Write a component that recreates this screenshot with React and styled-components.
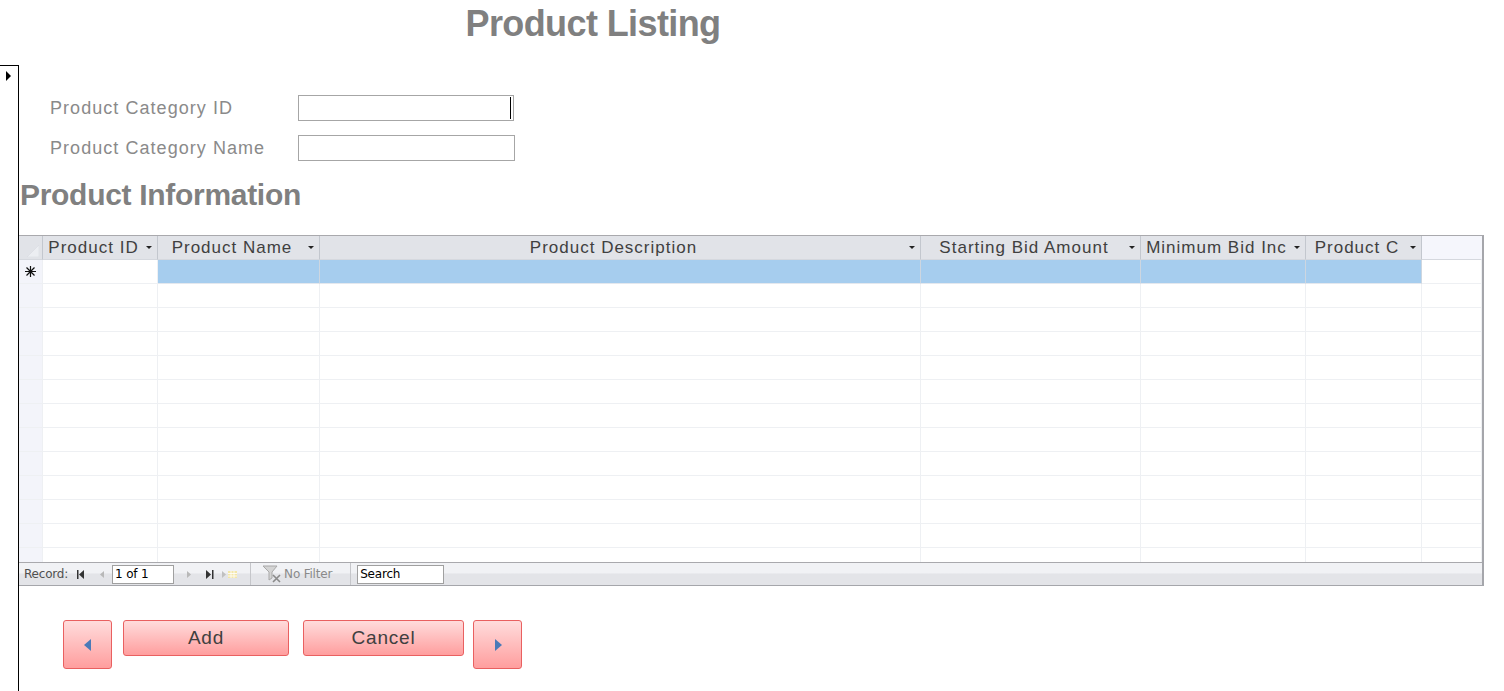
import React from 'react';
import styled, { createGlobalStyle } from 'styled-components';

const GlobalStyle = createGlobalStyle`
  html, body {
    margin: 0;
    padding: 0;
    background: #ffffff;
    font-family: "Liberation Sans", Arial, sans-serif;
  }
`;

const Page = styled.div`
  width: 1504px;
  height: 691px;
  overflow: hidden;
  display: flex;
  flex-direction: column;
`;

const TitleBar = styled.div`
  width: 1186px;
  height: 65px;
  text-align: center;
`;

const Title = styled.h1`
  margin: 0;
  padding-top: 3px;
  font-size: 36px;
  line-height: 42px;
  font-weight: bold;
  color: #808080;
  letter-spacing: -0.6px;
`;

const Body = styled.div`
  flex: 1;
  display: flex;
`;

const Selector = styled.div`
  width: 18px;
  border-top: 1px solid #000;
  border-right: 1px solid #000;
  position: relative;
`;

const Pointer = styled.div`
  position: absolute;
  top: 5px;
  left: 6px;
  width: 0;
  height: 0;
  border-top: 5px solid transparent;
  border-bottom: 5px solid transparent;
  border-left: 5px solid #000;
`;

const Content = styled.div`
  flex: 1;
  display: flex;
  flex-direction: column;
`;

const Fields = styled.div`
  padding: 30px 0 0 31px;
  display: flex;
  flex-direction: column;
  gap: 14px;
`;

const FieldRow = styled.div`
  display: flex;
  align-items: center;
  height: 26px;
`;

const Label = styled.label`
  width: 248px;
  font-size: 18px;
  color: #8a8a8a;
  letter-spacing: 1.05px;
`;

const Input = styled.div`
  box-sizing: border-box;
  width: ${p => p.$w}px;
  height: 26px;
  border: 1px solid #a6a6a6;
  background: #fff;
  position: relative;
`;

const Caret = styled.span`
  position: absolute;
  right: 2px;
  top: 1px;
  width: 1px;
  height: 22px;
  background: #000;
`;

const Section = styled.h2`
  margin: 14px 0 0 1px;
  font-size: 30px;
  line-height: 40px;
  font-weight: bold;
  color: #808080;
  letter-spacing: -0.3px;
`;

const Sheet = styled.div`
  margin-top: 20px;
  width: 1465px;
  box-sizing: border-box;
  border-top: 1px solid #a9a9ad;
  border-right: 2px solid #a5a6ab;
  border-bottom: 1px solid #a5a6ab;
  display: flex;
  flex-direction: column;
`;

const COLS = '24px 115px 162px 601px 220px 165px 116px 1fr';

const Row = styled.div`
  display: grid;
  grid-template-columns: ${COLS};
  height: 24px;
`;

const HeadCell = styled.div`
  box-sizing: border-box;
  display: flex;
  align-items: center;
  padding: 0 5px 0 2px;
  background: ${p => (p.$blank ? '#f5f6fc' : '#e1e3e8')};
  border-right: 1px solid ${p => (p.$blank ? 'transparent' : '#c3c7ce')};
  border-bottom: 1px solid #d5d8de;
  font-size: 17px;
  letter-spacing: 1px;
  color: #404040;
  overflow: hidden;
  white-space: nowrap;
  position: relative;
`;

const HeadText = styled.span`
  flex: 1;
  text-align: center;
  overflow: hidden;
`;

const DropArrow = styled.span`
  flex: none;
  width: 0;
  height: 0;
  margin-left: 4px;
  border-left: 3px solid transparent;
  border-right: 3px solid transparent;
  border-top: 3px solid #222;
`;

const Corner = styled.svg`
  position: absolute;
  left: 8px;
  bottom: 2px;
`;

const Cell = styled.div`
  box-sizing: border-box;
  border-right: 1px solid ${p => (p.$blue ? '#cdd6e0' : '#eef0f3')};
  border-bottom: 1px solid ${p => (p.$blue ? '#e4e8ee' : '#eef0f3')};
  background: ${p => (p.$blue ? '#a6cdee' : p.$side ? '#f3f4fa' : '#fff')};
  display: flex;
  align-items: center;
  justify-content: center;
`;

const Rows = styled.div`
  height: 302px;
  overflow: hidden;
`;

const NavBar = styled.div`
  height: 22px;
  border-top: 1px solid #a9a9ad;
  background: linear-gradient(#f1f2f5 0%, #f1f2f5 45%, #e3e4e8 50%, #e3e4e8 100%);
  display: flex;
  align-items: center;
  font-family: "DejaVu Sans", "Liberation Sans", sans-serif;
  font-size: 12px;
  color: #505050;
`;

const NavLabel = styled.span`
  margin-left: 5px;
  margin-right: 9px;
  letter-spacing: -0.2px;
`;

const NavIcon = styled.svg`
  flex: none;
  margin-right: ${p => p.$mr || 10}px;
`;

const NavBox = styled.div`
  box-sizing: border-box;
  width: ${p => p.$w}px;
  height: 19px;
  border: 1px solid #a0a0a0;
  background: #fff;
  padding-left: 2px;
  display: flex;
  align-items: center;
  color: #000;
  letter-spacing: -0.2px;
`;

const Divider = styled.span`
  width: 1px;
  align-self: stretch;
  background: #c5c6ca;
  margin: 0 ${p => p.$r}px 0 ${p => p.$l}px;
`;

const FilterText = styled.span`
  color: #8a8a8a;
  letter-spacing: -0.2px;
`;

const Buttons = styled.div`
  margin: 34px 0 0 44px;
  display: flex;
  align-items: flex-start;
`;

const Btn = styled.button`
  box-sizing: border-box;
  width: ${p => p.$w}px;
  height: ${p => p.$h}px;
  margin-right: ${p => p.$mr || 0}px;
  border: 1px solid #e96060;
  border-radius: 3px;
  background: linear-gradient(#ffdcdc, #ff9e9e);
  font-family: "Liberation Sans", Arial, sans-serif;
  font-size: 19px;
  font-weight: normal;
  letter-spacing: 0.8px;
  color: #404040;
  display: flex;
  align-items: center;
  justify-content: center;
  padding: 0;
`;

const headers = [
  'Product ID',
  'Product Name',
  'Product Description',
  'Starting Bid Amount',
  'Minimum Bid Inc',
  'Product C',
];

function Nav() {
  return (
    <NavBar>
      <NavLabel>Record:</NavLabel>
      <NavIcon width="8" height="9" viewBox="0 0 8 9" $mr={14}>
        <rect x="0" y="0" width="1.5" height="9" fill="#333" />
        <path d="M7 0 L2 4.5 L7 9 Z" fill="#333" />
      </NavIcon>
      <NavIcon width="6" height="9" viewBox="0 0 6 9" $mr={7}>
        <path d="M5 1 L1 4.5 L5 8 Z" fill="#b8b8b8" />
      </NavIcon>
      <NavBox $w={62}>1 of 1</NavBox>
      <NavIcon width="6" height="9" viewBox="0 0 6 9" $mr={14} style={{ marginLeft: 12 }}>
        <path d="M1 1 L5 4.5 L1 8 Z" fill="#b8b8b8" />
      </NavIcon>
      <NavIcon width="8" height="9" viewBox="0 0 8 9" $mr={8}>
        <path d="M0 0 L5 4.5 L0 9 Z" fill="#333" />
        <rect x="6" y="0" width="1.5" height="9" fill="#333" />
      </NavIcon>
      <NavIcon width="16" height="9" viewBox="0 0 16 9" $mr={0}>
        <path d="M0 1 L4 4.5 L0 8 Z" fill="#c0c0c0" />
        <rect x="6" y="1" width="9" height="7" fill="#f3e6a8" />
        <path d="M6 3.5 H15 M6 6 H15 M9 1 V8 M12 1 V8" stroke="#fff" strokeWidth="0.8" />
      </NavIcon>
      <Divider $l={2} $r={11} />
      <NavIcon width="20" height="18" viewBox="0 0 20 18" $mr={2}>
        <path d="M1 1 H15 L10 7 V13 L7 15 V7 Z" fill="#d4d4d4" stroke="#a8a8a8" strokeWidth="1" />
        <path d="M11 10 L18 17 M18 10 L11 17" stroke="#8a8a8a" strokeWidth="1.6" />
      </NavIcon>
      <FilterText>No Filter</FilterText>
      <Divider $l={18} $r={6} />
      <NavBox $w={87}>Search</NavBox>
    </NavBar>
  );
}

export default function App() {
  return (
    <Page>
      <GlobalStyle />
      <TitleBar>
        <Title>Product Listing</Title>
      </TitleBar>
      <Body>
        <Selector>
          <Pointer />
        </Selector>
        <Content>
          <Fields>
            <FieldRow>
              <Label>Product Category ID</Label>
              <Input $w={216}>
                <Caret />
              </Input>
            </FieldRow>
            <FieldRow>
              <Label>Product Category Name</Label>
              <Input $w={217} />
            </FieldRow>
          </Fields>
          <Section>Product Information</Section>
          <Sheet>
            <Row>
              <HeadCell>
                <Corner width="12" height="12" viewBox="0 0 12 12">
                  <path d="M12 0 L12 12 L0 12 Z" fill="#eceef2" stroke="#d6d9de" strokeWidth="0.5" />
                </Corner>
              </HeadCell>
              {headers.map(h => (
                <HeadCell key={h}>
                  <HeadText>{h}</HeadText>
                  <DropArrow />
                </HeadCell>
              ))}
              <HeadCell $blank />
            </Row>
            <Rows>
              <Row>
                <Cell $side>
                  <svg width="11" height="11" viewBox="0 0 11 11">
                    <path d="M5.5 0 V11 M0 5.5 H11 M1.5 1.5 L9.5 9.5 M9.5 1.5 L1.5 9.5" stroke="#111" strokeWidth="1.2" />
                  </svg>
                </Cell>
                <Cell />
                <Cell $blue />
                <Cell $blue />
                <Cell $blue />
                <Cell $blue />
                <Cell $blue />
                <Cell />
              </Row>
              {Array.from({ length: 12 }).map((_, i) => (
                <Row key={i}>
                  <Cell $side />
                  <Cell />
                  <Cell />
                  <Cell />
                  <Cell />
                  <Cell />
                  <Cell />
                  <Cell />
                </Row>
              ))}
            </Rows>
            <Nav />
          </Sheet>
          <Buttons>
            <Btn $w={49} $h={49} $mr={11}>
              <svg width="8" height="12" viewBox="0 0 8 12">
                <path d="M7 0 L0 6 L7 12 Z" fill="#4a7ab8" />
              </svg>
            </Btn>
            <Btn $w={166} $h={36} $mr={14}>Add</Btn>
            <Btn $w={161} $h={36} $mr={9}>Cancel</Btn>
            <Btn $w={49} $h={49}>
              <svg width="8" height="12" viewBox="0 0 8 12">
                <path d="M1 0 L8 6 L1 12 Z" fill="#4a7ab8" />
              </svg>
            </Btn>
          </Buttons>
        </Content>
      </Body>
    </Page>
  );
}
